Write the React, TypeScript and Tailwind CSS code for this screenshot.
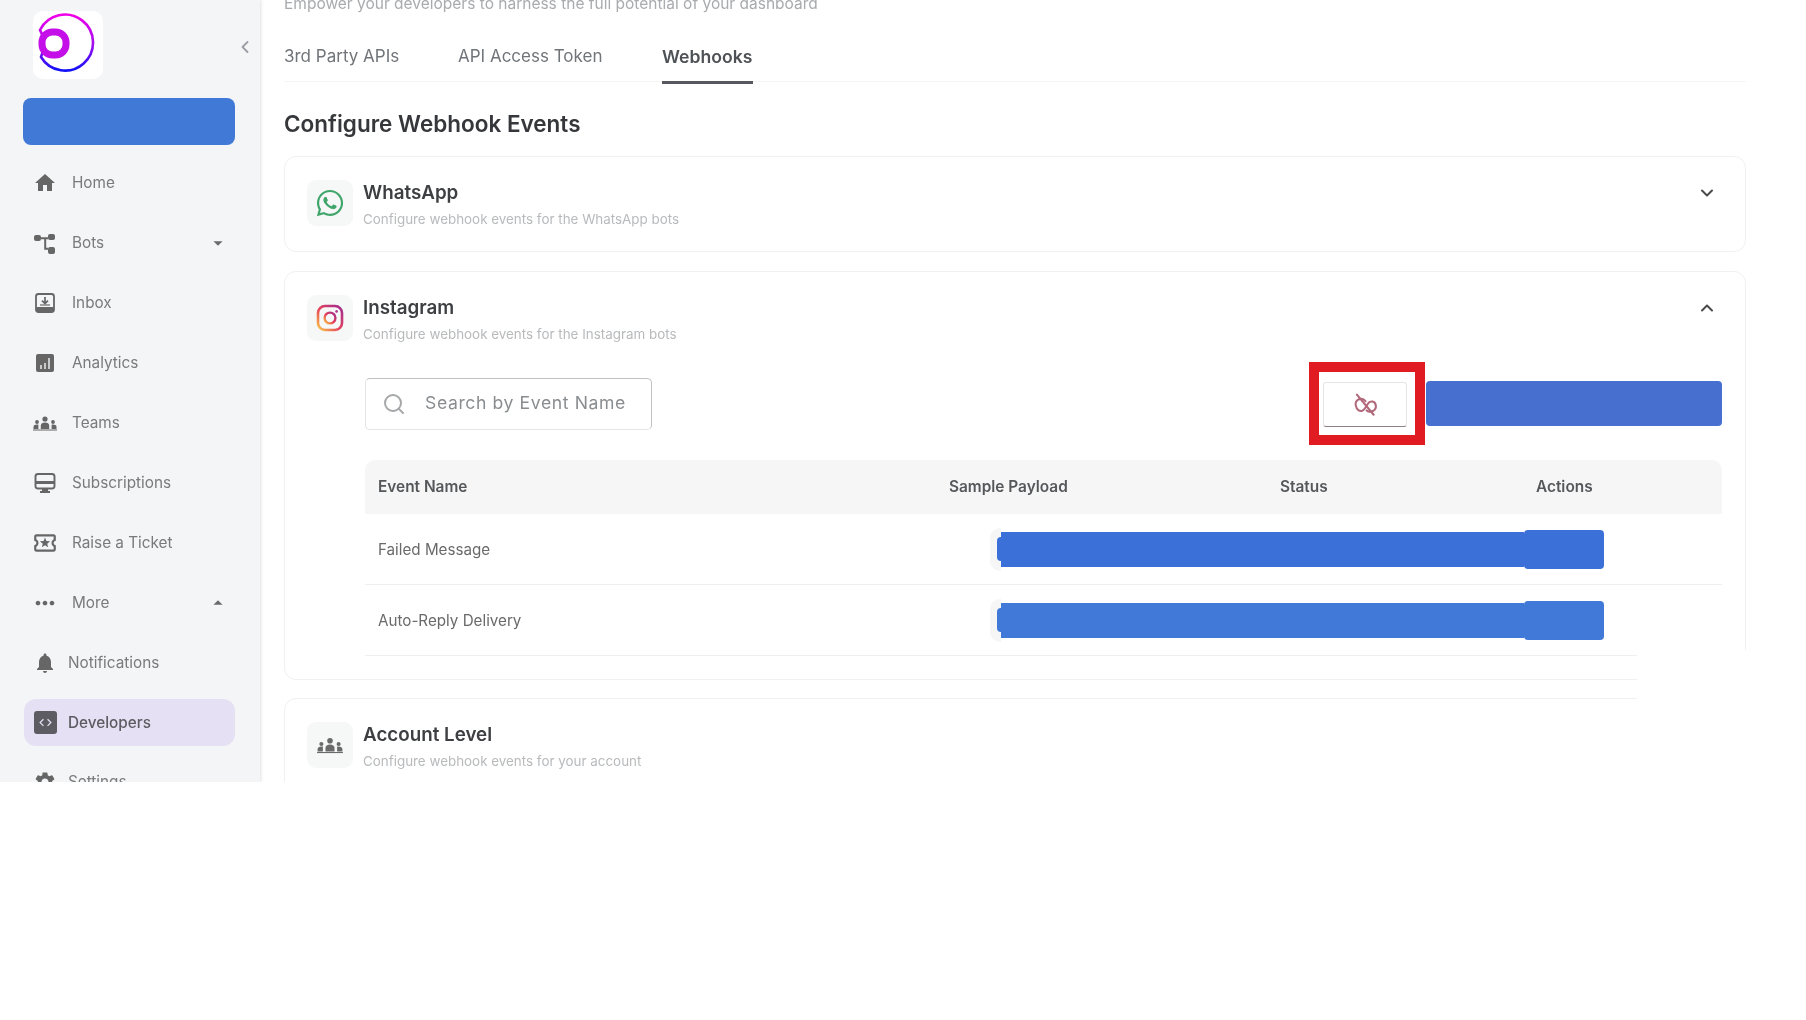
import React from "react";
import {
  MdHome, MdOutlineLocalActivity, MdMoreHoriz, MdNotifications, MdSettings,
  MdArrowDropDown, MdArrowDropUp, MdCode,
} from "react-icons/md";
import { FaWhatsapp } from "react-icons/fa";
import { ChevronDown, ChevronUp, ChevronLeft, Search } from "lucide-react";

const font = "font-['Inter','Liberation_Sans',sans-serif]";

function Logo() {
  return (
    <svg width="70" height="68" viewBox="0 0 70 68" fill="none">
      <defs>
        <linearGradient id="lg" x1="0" y1="0" x2="0" y2="1">
          <stop offset="0" stopColor="#f000e8" />
          <stop offset="0.55" stopColor="#a010f0" />
          <stop offset="1" stopColor="#1010f8" />
        </linearGradient>
      </defs>
      <path d="M7 19 A28 28 0 1 1 8 46 A30 30 0 0 0 7 19 Z" stroke="url(#lg)" strokeWidth="2.6" />
      <rect x="9" y="21" width="24" height="23" rx="10.5" stroke="#c50fe8" strokeWidth="7" />
    </svg>
  );
}

function InstagramIcon() {
  return (
    <svg width="28" height="28" viewBox="0 0 28 28" fill="none">
      <defs>
        <linearGradient id="ig" x1="0" y1="1" x2="1" y2="0">
          <stop offset="0" stopColor="#f7c948" />
          <stop offset="0.45" stopColor="#e8445a" />
          <stop offset="1" stopColor="#a02a90" />
        </linearGradient>
      </defs>
      <rect x="2" y="2" width="24" height="24" rx="7" stroke="url(#ig)" strokeWidth="2.6" />
      <circle cx="14" cy="14" r="5.4" stroke="url(#ig)" strokeWidth="2.4" />
      <circle cx="20.6" cy="7.4" r="1.3" fill="#b0308a" />
    </svg>
  );
}

function BotsIcon() {
  return (
    <svg width="24" height="24" viewBox="0 0 24 24" fill="currentColor">
      <rect x="1" y="4" width="7" height="6" rx="2" />
      <rect x="15" y="3" width="7" height="6" rx="2" />
      <rect x="15" y="16" width="7" height="7" rx="2" />
      <path d="M8 6.2h7v2H13.2v8.6H15v2h-3.8V8.2H8z" />
    </svg>
  );
}

function InboxIcon() {
  return (
    <svg width="22" height="22" viewBox="0 0 22 22" fill="none">
      <rect x="2" y="2" width="18" height="18" rx="2.5" stroke="currentColor" strokeWidth="1.8" />
      <rect x="2" y="15" width="18" height="5" rx="1.5" fill="currentColor" />
      <path d="M11 5v6M8 8.6l3 3 3-3" stroke="currentColor" strokeWidth="1.7" />
      <path d="M6 13h10" stroke="currentColor" strokeWidth="1.2" />
    </svg>
  );
}

function ChartIcon() {
  return (
    <svg width="20" height="20" viewBox="0 0 20 20" fill="none">
      <rect x="1" y="1" width="18" height="18" rx="2" fill="currentColor" />
      <rect x="5" y="12" width="2" height="4" fill="#c9cacc" />
      <rect x="9" y="10" width="2" height="6" fill="#c9cacc" />
      <rect x="13" y="5" width="2" height="11" fill="#c9cacc" />
    </svg>
  );
}

function TeamsIcon({ size = 26 }: { size?: number }) {
  return (
    <svg width={size} height={size} viewBox="0 0 26 26" fill="currentColor">
      <circle cx="13" cy="9" r="2.6" />
      <path d="M8.8 19v-3.4c0-1.8 1.8-3 4.2-3s4.2 1.2 4.2 3V19z" />
      <circle cx="5" cy="12" r="1.9" />
      <path d="M1.5 19v-2.2c0-1.4 1.5-2.3 3.5-2.3.6 0 1 .1 1.5.2-.1.3-.1.6-.1.9V19z" />
      <circle cx="21" cy="12" r="1.9" />
      <path d="M24.5 19v-2.2c0-1.4-1.5-2.3-3.5-2.3-.6 0-1 .1-1.5.2.1.3.1.6.1.9V19z" />
      <rect x="1" y="19.5" width="24" height="1" />
    </svg>
  );
}

function MonitorIcon() {
  return (
    <svg width="24" height="24" viewBox="0 0 24 24" fill="none">
      <rect x="2.5" y="3" width="19" height="14.5" rx="2.5" stroke="currentColor" strokeWidth="1.9" />
      <rect x="2.5" y="10" width="19" height="3" fill="currentColor" />
      <path d="M7 20h10v2H7z" fill="currentColor" />
      <path d="M9 17.5h6V20H9z" fill="currentColor" />
    </svg>
  );
}

function UnlinkIcon() {
  return (
    <svg width="26" height="26" viewBox="0 0 24 24" fill="none" stroke="currentColor" strokeWidth="1.9" strokeLinecap="round">
      <path d="M12.5 8.5 C10.5 5.5 5 5.5 3.5 9.5 C2.5 13 5 18 9 17.5 C11 17 12.5 14.5 14.5 11 C16.5 7.5 21.5 8 22 12.5 C22.5 17 17 20 13.5 17" />
      <path d="M4.5 2.5 L20 21" />
    </svg>
  );
}

function DevIcon() {
  return (
    <span className="flex h-[23px] w-[23px] items-center justify-center rounded-[3px] bg-[#5c5c62] text-[#e5e0f3]">
      <MdCode size={15} />
    </span>
  );
}

const navTop = [
  { label: "Home", icon: <MdHome size={24} /> },
  { label: "Bots", icon: <BotsIcon />, caret: "down" },
  { label: "Inbox", icon: <InboxIcon /> },
  { label: "Analytics", icon: <ChartIcon /> },
  { label: "Teams", icon: <TeamsIcon /> },
  { label: "Subscriptions", icon: <MonitorIcon /> },
  { label: "Raise a Ticket", icon: <MdOutlineLocalActivity size={26} /> },
  { label: "More", icon: <MdMoreHoriz size={28} />, caret: "up" },
];

function Sidebar() {
  return (
    <aside className="flex h-full w-[260px] shrink-0 flex-col bg-[#f4f5f7] shadow-[1px_0_3px_rgba(0,0,0,0.12)]">
      <div className="relative ml-[33px] mt-[11px] flex h-[68px] w-[70px] shrink-0 items-center justify-center rounded-[10px] bg-white">
        <Logo />
      </div>
      <ChevronLeft size={20} strokeWidth={2.2} className="absolute left-[235px] top-[37px] text-[#9a9da3]" />
      <div className="ml-[23px] mt-[19px] h-[47px] w-[212px] shrink-0 rounded-[8px] bg-[#4079d6]" />
      <nav className="mt-[8px] flex flex-col">
        {navTop.map((n) => (
          <div key={n.label} className="flex h-[60px] shrink-0 items-center pl-[31px] text-[15.3px] text-[#7a7a7a]">
            <span className="flex w-[28px] items-center justify-center text-[#666666]">{n.icon}</span>
            <span className="ml-[13px]">{n.label}</span>
            {n.caret === "down" && <MdArrowDropDown size={22} className="ml-auto mr-[31px] text-[#6b6b6b]" />}
            {n.caret === "up" && <MdArrowDropUp size={22} className="ml-auto mr-[31px] text-[#6b6b6b]" />}
          </div>
        ))}
        <div className="flex h-[60px] shrink-0 items-center pl-[33px] text-[15.3px] text-[#7a7a7a]">
          <span className="flex w-[24px] items-center justify-center text-[#666666]"><MdNotifications size={24} /></span>
          <span className="ml-[11px]">Notifications</span>
        </div>
        <div className="mx-[24px] my-[6px] flex h-[47px] w-[211px] shrink-0 items-center rounded-[12px] bg-[#e5e0f3] pl-[9px] text-[15.3px] font-medium text-[#5c5c62]">
          <span className="flex w-[24px] items-center justify-center"><DevIcon /></span>
          <span className="ml-[11px] pt-[2px]">Developers</span>
        </div>
        <div className="flex h-[60px] shrink-0 items-center pl-[33px] text-[15.3px] text-[#7a7a7a]">
          <span className="flex w-[24px] items-center justify-center text-[#666666]"><MdSettings size={26} /></span>
          <span className="ml-[11px]">Settings</span>
        </div>
      </nav>
    </aside>
  );
}

function CardHeader({ icon, title, sub, open }: { icon: React.ReactNode; title: string; sub: string; open?: boolean }) {
  return (
    <div className="flex items-start">
      <div className="flex h-[46px] w-[46px] shrink-0 items-center justify-center rounded-[9px] bg-[#f6f7f7]">{icon}</div>
      <div className="ml-[10px] flex flex-col">
        <div className="mt-[1px] h-[24px] text-[18.8px] font-semibold leading-[24px] text-[#3d3f42]">{title}</div>
        <div className="mt-[4px] text-[13.4px] leading-[20px] text-[#b8babc]">{sub}</div>
      </div>
      <span className="ml-auto mr-[6px] mt-[3px] text-[#4a4a4a]">
        {open ? <ChevronUp size={20} strokeWidth={2.4} /> : <ChevronDown size={20} strokeWidth={2.4} />}
      </span>
    </div>
  );
}

function Row({ label, barColor, border }: { label: string; barColor: string; border?: boolean }) {
  return (
    <div className={`flex h-[71px] items-center pl-[13px] ${border ? "border-b border-[#efefef]" : ""}`}>
      <span className="w-[612px] pt-[3px] text-[15.2px] text-[#6a6a6a]">{label}</span>
      <span className="flex h-[43px] w-[11px] items-center justify-end rounded-l-[10px] bg-[#f6f6f6]">
        <span className={`h-[24px] w-[4px] rounded-l-full ${barColor}`} />
      </span>
      <span className={`h-[35px] w-[523px] ${barColor}`} />
      <span className={`h-[39px] w-[80px] rounded-[4px] ${barColor}`} />
    </div>
  );
}

export default function App() {
  return (
    <div className={`relative min-h-screen bg-white ${font}`}>
      <div className="relative flex h-[782px] overflow-hidden bg-white blur-[0.7px]">
        <Sidebar />
        <main className="flex min-w-0 flex-1 flex-col pl-[24px] pr-[60px]">
          <p className="-mt-[6px] h-[20px] shrink-0 text-[15.5px] leading-[20px] text-[#a9abae]">
            Empower your developers to harness the full potential of your dashboard
          </p>
          <div className="mt-[22px] flex h-[46px] shrink-0 border-b border-[#f5f5f5] text-[17px]">
            <span className="flex w-[174px] items-center pb-[3px] text-[#70757a]">3rd Party APIs</span>
            <span className="flex w-[204px] items-center pb-[3px] text-[#70757a]">API Access Token</span>
            <span className="flex h-[48px] w-[91px] items-center whitespace-nowrap border-b-[3px] border-[#55585c] pb-[2px] text-[17.6px] font-semibold text-[#4e5256]">Webhooks</span>
          </div>
          <h1 className="mt-[26px] h-[32px] shrink-0 text-[22.5px] font-semibold leading-[32px] text-[#35373a]">Configure Webhook Events</h1>

          <section className="mt-[16px] h-[96px] shrink-0 rounded-[12px] border border-[#f1f1f1] px-[22px] pt-[23px]">
            <CardHeader icon={<FaWhatsapp size={30} className="text-[#3fa56b]" />} title="WhatsApp" sub="Configure webhook events for the WhatsApp bots" />
          </section>

          <section className="mt-[19px] h-[409px] shrink-0 rounded-[12px] border border-[#f1f1f1] pt-[23px]">
            <div className="px-[22px]">
              <CardHeader icon={<InstagramIcon />} title="Instagram" sub="Configure webhook events for the Instagram bots" open />
            </div>
            <div className="ml-[80px] mr-[23px]">
              <div className="mt-[18px] flex items-center">
                <div className="flex h-[52px] w-[287px] items-center rounded-[5px] border border-[#e4e4e4] border-r-[#c0c0c0] border-t-[#c0c0c0] pl-[16px] text-[#8a8d90]">
                  <Search size={24} strokeWidth={2} className="text-[#a5a7a9]" />
                  <span className="ml-[19px] text-[17.6px] tracking-[0.6px]">Search by Event Name</span>
                </div>
                <div className="ml-auto flex h-[83px] w-[116px] items-start border-[10px] border-[#e01b22] pl-[4px] pt-[10px]">
                  <div className="flex h-[45px] w-[84px] items-center justify-center rounded-[3px] border border-[#e8e3e6] border-b-[#8f7f86] text-[#b0687a]">
                    <UnlinkIcon />
                  </div>
                </div>
                <div className="ml-[1px] h-[45px] w-[296px] rounded-[4px] bg-[#476fcf]" />
              </div>
              <div className="mt-[15px] grid h-[54px] grid-cols-[571px_331px_256px_1fr] items-center rounded-t-[10px] bg-[#f6f6f6] pl-[13px] text-[15.4px] font-semibold text-[#55585a]">
                <span>Event Name</span>
                <span>Sample Payload</span>
                <span>Status</span>
                <span>Actions</span>
              </div>
              <Row label="Failed Message" barColor="bg-[#3a70d8]" border />
              <Row label="Auto-Reply Delivery" barColor="bg-[#4079d8]" border />
            </div>
          </section>

          <section className="mt-[18px] h-[120px] shrink-0 rounded-[12px] border border-[#f1f1f1] px-[22px] pt-[23px]">
            <CardHeader icon={<span className="text-[#6a6a6a]"><TeamsIcon size={28} /></span>} title="Account Level" sub="Configure webhook events for your account" />
          </section>
        </main>
        <div className="absolute bottom-0 left-[1637px] right-0 top-[650px] bg-white" />
      </div>
    </div>
  );
}
